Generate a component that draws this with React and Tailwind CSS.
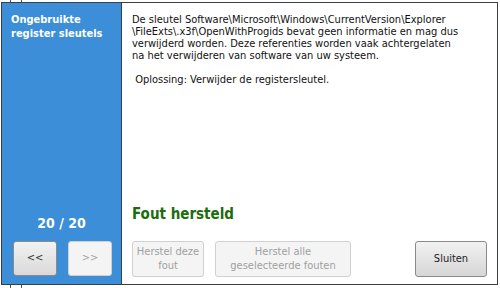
export default function App() {
  const font = { fontFamily: 'Tahoma, "DejaVu Sans Condensed", "DejaVu Sans", sans-serif' };
  return (
    <div className="relative w-[500px] h-[288px] bg-white text-[11px]" style={font}>
      <div className="absolute left-[10px] top-0 h-[2px] w-px bg-[#555]" />
      <div className="absolute left-[21px] top-0 h-[2px] w-px bg-[#555]" />
      <div className="absolute left-[10px] bottom-0 h-[3px] w-px bg-[#555]" />
      <div className="absolute left-[21px] bottom-0 h-[3px] w-px bg-[#555]" />
      <div className="absolute left-[1px] top-[2px] w-[497px] h-[283px] flex border border-[#3a3f45]">
        <div className="w-[120px] bg-[#3b8ed7] border-r border-[#2d4055] flex flex-col">
          <div className="px-[9px] pt-[10px] text-white font-bold leading-[14px]">
            Ongebruikte<br />register sleutels
          </div>
          <div className="flex-1" />
          <div className="text-center text-white font-bold text-[14px] leading-[16px] mb-[10px]">20 / 20</div>
          <div className="flex gap-[11px] pl-[11px] pb-[8px]">
            <button className="w-[44px] h-[35px] rounded-[3px] border border-[#8a8a8a] bg-gradient-to-b from-[#f2f2f2] to-[#d9d9d9] text-[#333]">&lt;&lt;</button>
            <button className="w-[44px] h-[35px] rounded-[3px] border border-[#d0d0d0] bg-[#f4f4f4] text-[#a8a8a8]">&gt;&gt;</button>
          </div>
        </div>
        <div className="flex-1 flex flex-col pl-[10px] pr-[10px]">
          <div className="pt-[11px] text-[#111] leading-[12px] whitespace-nowrap">
            De sleutel Software\Microsoft\Windows\CurrentVersion\Explorer<br />
            \FileExts\.x3f\OpenWithProgids bevat geen informatie en mag dus<br />
            verwijderd worden. Deze referenties worden vaak achtergelaten<br />
            na het verwijderen van software van uw systeem.<br />
            <br />
            &nbsp;Oplossing: Verwijder de registersleutel.
          </div>
          <div className="flex-1" />
          <div className="text-[#1d6b0c] font-bold text-[15px] leading-[18px] mb-[18px]">Fout hersteld</div>
          <div className="flex items-center pb-[7px]">
            <button className="w-[72px] h-[36px] rounded-[3px] border border-[#d0d0d0] bg-[#f4f4f4] text-[#a0a0a0] leading-[14px]">Herstel deze<br />fout</button>
            <button className="ml-[11px] w-[136px] h-[36px] rounded-[3px] border border-[#d0d0d0] bg-[#f4f4f4] text-[#a0a0a0] leading-[14px]">Herstel alle<br />geselecteerde fouten</button>
            <div className="flex-1" />
            <button className="w-[72px] h-[36px] rounded-[3px] border border-[#8a8a8a] bg-gradient-to-b from-[#f2f2f2] to-[#d6d6d6] text-[#222]">Sluiten</button>
          </div>
        </div>
      </div>
    </div>
  );
}
